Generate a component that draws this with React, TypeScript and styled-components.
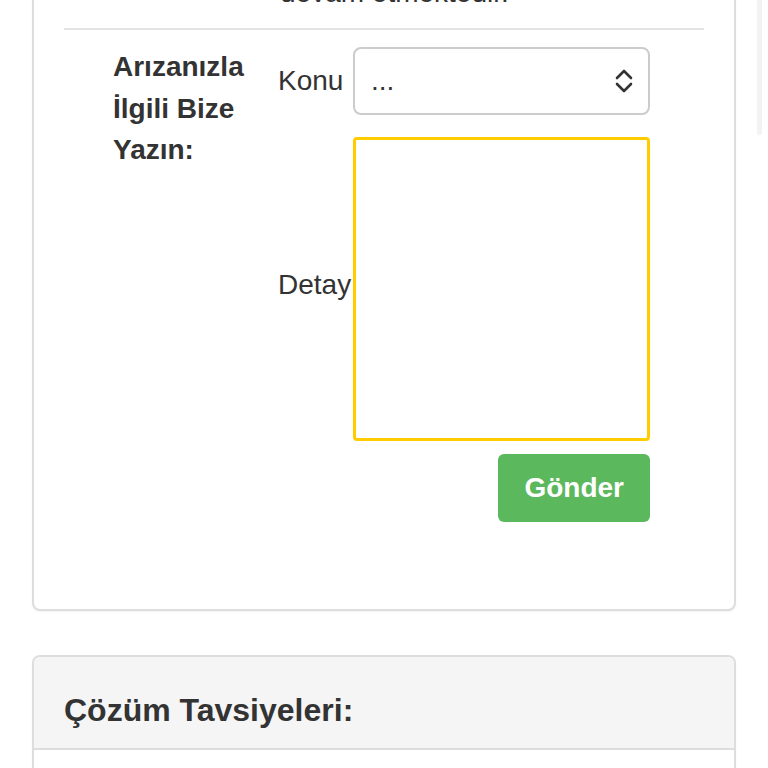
import styled, { createGlobalStyle } from "styled-components";

const GlobalStyle = createGlobalStyle`
  html, body {
    margin: 0;
    padding: 0;
    background: #fff;
    overflow: hidden;
  }
  body {
    font-family: "Liberation Sans", Arial, Helvetica, sans-serif;
    color: #333;
    font-size: 28px;
  }
`;

const Page = styled.div`
  margin-top: -59px;
  padding: 0 32px;
  display: flex;
  flex-direction: column;
  gap: 44px;
`;

const Panel = styled.div`
  border: 2px solid #ddd;
  border-radius: 8px;
  background: #fff;
  box-shadow: 0 1px 2px rgba(0, 0, 0, 0.05);
  overflow: hidden;
`;

const PanelBody = styled.div`
  padding: 30px 30px 87px;
`;

const Note = styled.p`
  margin: 0;
  line-height: 40px;
  padding-left: 216px;
`;

const Rule = styled.hr`
  margin: 15px 0 17px;
  border: 0;
  border-top: 2px solid #e3e3e3;
`;

const FormRow = styled.div`
  display: flex;
  padding-left: 49px;
`;

const FormTitle = styled.div`
  width: 150px;
  margin-right: 15px;
  font-weight: bold;
  line-height: 41.5px;
  margin-top: -1px;
`;

const Fields = styled.div`
  width: 372px;
  display: flex;
  flex-direction: column;
`;

const Field = styled.div<{ $gap?: number }>`
  display: flex;
  align-items: center;
  margin-bottom: ${(p) => p.$gap ?? 0}px;
`;

const Label = styled.label<{ $lift?: number }>`
  width: 75px;
  flex-shrink: 0;
  white-space: nowrap;
  line-height: 40px;
  margin-bottom: ${(p) => p.$lift ?? 0}px;
`;

const SelectBox = styled.div`
  position: relative;
  flex: 1;
  height: 68px;
  box-sizing: border-box;
  border: 2px solid #ccc;
  border-radius: 8px;
  display: flex;
  align-items: center;
  padding: 0 16px;
  color: #333;
  background: #fff;
`;

const Chevrons = styled.svg`
  position: absolute;
  right: 14px;
  top: 50%;
  transform: translateY(-50%);
`;

const TextArea = styled.textarea`
  flex: 1;
  height: 304px;
  box-sizing: border-box;
  border: 3px solid #fc0;
  border-radius: 4px;
  resize: none;
  outline: none;
  font: inherit;
  padding: 12px 24px;
`;

const Actions = styled.div`
  display: flex;
  justify-content: flex-end;
`;

const SubmitButton = styled.button`
  height: 68px;
  padding: 0 26px;
  border: 0;
  border-radius: 6px;
  background: #5cb85c;
  color: #fff;
  font: inherit;
  font-weight: bold;
`;

const PanelHeading = styled.div`
  background: #f5f5f5;
  border-bottom: 2px solid #ddd;
  padding: 36px 30px 20px;
`;

const PanelTitle = styled.h3`
  margin: 0;
  font-size: 32px;
  line-height: 35px;
  font-weight: bold;
`;

const PanelFill = styled.div`
  height: 120px;
`;

const ScrollThumb = styled.div`
  position: fixed;
  top: 0;
  right: 6px;
  width: 5px;
  height: 135px;
  background: #f3f3f3;
  border-radius: 0 0 3px 3px;
`;

export default function App() {
  return (
    <>
      <GlobalStyle />
      <Page>
        <Panel>
          <PanelBody>
            <Note>devam etmektedir.</Note>
            <Rule />
            <FormRow>
              <FormTitle>Arızanızla İlgili Bize Yazın:</FormTitle>
              <Fields>
                <Field $gap={22}>
                  <Label>Konu</Label>
                  <SelectBox>
                    ...
                    <Chevrons width="20" height="26" viewBox="0 0 20 26">
                      <path
                        d="M3 10 L10 3 L17 10 M3 16 L10 23 L17 16"
                        fill="none"
                        stroke="#333"
                        strokeWidth="2.6"
                        strokeLinecap="round"
                        strokeLinejoin="round"
                      />
                    </Chevrons>
                  </SelectBox>
                </Field>
                <Field $gap={13}>
                  <Label $lift={8}>Detay</Label>
                  <TextArea />
                </Field>
                <Actions>
                  <SubmitButton>Gönder</SubmitButton>
                </Actions>
              </Fields>
            </FormRow>
          </PanelBody>
        </Panel>
        <Panel>
          <PanelHeading>
            <PanelTitle>Çözüm Tavsiyeleri:</PanelTitle>
          </PanelHeading>
          <PanelFill />
        </Panel>
      </Page>
      <ScrollThumb />
    </>
  );
}
